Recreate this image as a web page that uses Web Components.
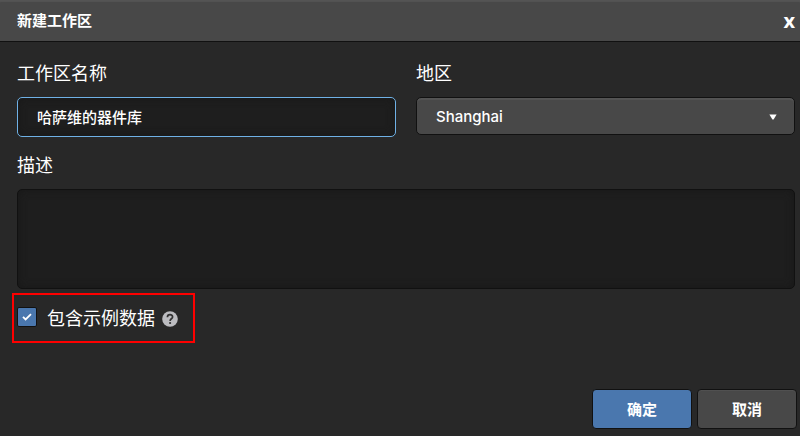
<!DOCTYPE html>
<html lang="zh-CN">
<head>
<meta charset="utf-8">
<title>新建工作区</title>
<style>
    body {
        margin: 0;
        background-color: #282828;
        color: #fff;
        font-family: Inter, "Noto Sans CJK SC", sans-serif;
    }
    .pair {
        display: grid;
        grid-template-columns: 1fr 1fr;
        align-items: start;
        gap: 20px;
    }
</style>
</head>
<body>

<workspace-dialog heading="新建工作区">
    <div class="pair">
        <text-field label="工作区名称" value="哈萨维的器件库"></text-field>
        <select-field label="地区" options="Shanghai"></select-field>
    </div>
    <text-field label="描述" multiline></text-field>
    <check-field checked>包含示例数据</check-field>
    <action-button slot="actions" class="primary">确定</action-button>
    <action-button slot="actions">取消</action-button>
</workspace-dialog>

<script>
const fieldStyle = `
    :host {
        display: block;
    }
    * {
        box-sizing: border-box;
    }
    label {
        display: block;
        margin-bottom: 11px;
        font-size: 18px;
        line-height: 24px;
    }
    input, textarea, select {
        display: block;
        width: 100%;
        margin: 0;
        padding: 0 19px;
        border: 1px solid #111;
        border-radius: 5px;
        outline: none;
        color: #fff;
        font-family: inherit;
        font-size: 15px;
        font-weight: 500;
    }
`

class WorkspaceDialog extends HTMLElement {

    constructor() {
        super()
        this.attachShadow({mode: 'open'})
        this.shadowRoot.innerHTML = `
            <style>
                :host {
                    display: block;
                }
                header {
                    display: flex;
                    justify-content: space-between;
                    align-items: center;
                    height: 41px;
                    padding: 0 5px 0 17px;
                    border-bottom: 1px solid #111;
                    background-color: #484848;
                    box-shadow: inset 0 2px 1px #545454;
                }
                h1 {
                    margin: 0;
                    font-size: 15px;
                    line-height: 20px;
                }
                button {
                    margin: 0;
                    padding: 0;
                    border: 0;
                    background: none;
                    color: #fff;
                    font: bold 20px/20px "Open Sans", sans-serif;
                }
                main {
                    display: flex;
                    flex-direction: column;
                    gap: 17px;
                    padding: 20px 5px 0 17px;
                }
                footer {
                    display: flex;
                    justify-content: flex-end;
                    gap: 5px;
                    padding: 46px 3px 7px;
                }
            </style>
            <header>
                <h1></h1>
                <button type="button" aria-label="关闭">x</button>
            </header>
            <main><slot></slot></main>
            <footer><slot name="actions"></slot></footer>`
    }

    connectedCallback() {
        this.shadowRoot.querySelector('h1').textContent = this.getAttribute('heading')
    }
}

// one line input, or a textarea with the multiline attribute
class TextField extends HTMLElement {

    constructor() {
        super()
        this.attachShadow({mode: 'open'})
    }

    connectedCallback() {
        const control = this.hasAttribute('multiline')
            ? '<textarea id="control"></textarea>'
            : '<input id="control" type="text">'
        this.shadowRoot.innerHTML = `
            <style>
                ${fieldStyle}
                input, textarea {
                    background-color: #1e1e1e;
                    box-shadow: inset 0 0 8px #181818;
                }
                input {
                    height: 40px;
                    padding-bottom: 2px;
                    border-color: #6fb1e6;
                }
                textarea {
                    height: 100px;
                    padding: 10px 19px;
                    resize: none;
                }
            </style>
            <label for="control">${this.getAttribute('label')}</label>
            ${control}`
        this.shadowRoot.querySelector('#control').value = this.getAttribute('value') || ''
    }
}

class SelectField extends HTMLElement {

    constructor() {
        super()
        this.attachShadow({mode: 'open'})
    }

    connectedCallback() {
        const options = this.getAttribute('options').split(',')
        this.shadowRoot.innerHTML = `
            <style>
                ${fieldStyle}
                .box {
                    display: grid;
                    align-items: center;
                }
                .box > * {
                    grid-area: 1 / 1;
                }
                select {
                    appearance: none;
                    height: 38px;
                    background-color: #484848;
                    box-shadow: inset 0 2px 1px #545454;
                }
                svg {
                    justify-self: end;
                    margin: 2px 18px 0 0;
                    pointer-events: none;
                }
            </style>
            <label for="control">${this.getAttribute('label')}</label>
            <div class="box">
                <select id="control">
                    ${options.map(o => `<option>${o}</option>`).join('')}
                </select>
                <svg width="8" height="6" viewBox="0 0 8 6"><path d="M.4.5h7.2L4.6 5.6H3.4z" fill="#fff"/></svg>
            </div>`
    }
}

class CheckField extends HTMLElement {

    constructor() {
        super()
        this.attachShadow({mode: 'open'})
        this.shadowRoot.innerHTML = `
            <style>
                :host {
                    display: flex;
                    align-items: center;
                    align-self: flex-start;
                    box-sizing: border-box;
                    height: 50px;
                    margin: -13px 0 0 -5px;
                    padding: 2px 15px 0 3px;
                    border: 2px solid #f00;
                }
                label {
                    display: flex;
                    align-items: center;
                    gap: 10px;
                    font-size: 18px;
                    line-height: 24px;
                }
                .box {
                    display: grid;
                    place-items: center;
                    margin-bottom: 4px;
                }
                .box > * {
                    grid-area: 1 / 1;
                }
                input {
                    appearance: none;
                    box-sizing: border-box;
                    width: 20px;
                    height: 20px;
                    margin: 0;
                    border: 1px solid #111;
                    border-radius: 2px;
                    background-color: #484848;
                }
                input:checked {
                    background-color: #4a77ae;
                }
                svg {
                    display: block;
                }
                .box svg {
                    visibility: hidden;
                    pointer-events: none;
                }
                input:checked + svg {
                    visibility: visible;
                }
                .help {
                    margin-left: 7px;
                }
            </style>
            <label>
                <span class="box">
                    <input type="checkbox">
                    <svg width="10" height="10" viewBox="0 0 10 10"><path d="M1 4.8l2.6 2.6L9 2.2" fill="none" stroke="#fff" stroke-width="1.8"/></svg>
                </span>
                <slot></slot>
            </label>
            <svg class="help" width="16" height="16" viewBox="0 0 16 16">
                <circle cx="8" cy="8" r="7.8" fill="#bcbcc0"/>
                <path d="M5.4 6.2c0-3.4 5.2-3.2 5.2-.3 0 1.9-2.5 1.9-2.5 4" fill="none" stroke="#333" stroke-width="1.7"/>
                <circle cx="8.1" cy="12" r="1.1" fill="#333"/>
            </svg>`
    }

    connectedCallback() {
        this.shadowRoot.querySelector('input').checked = this.hasAttribute('checked')
    }
}

class ActionButton extends HTMLElement {

    constructor() {
        super()
        this.attachShadow({mode: 'open'})
        this.shadowRoot.innerHTML = `
            <style>
                :host {
                    display: block;
                }
                button {
                    display: block;
                    box-sizing: border-box;
                    width: 100px;
                    height: 40px;
                    padding: 0;
                    border: 1px solid #111;
                    border-radius: 4px;
                    background-color: #484848;
                    box-shadow: inset 0 1px 1px #525252;
                    color: #fff;
                    font: bold 15px/20px "Noto Sans CJK SC", sans-serif;
                }
                :host(.primary) button {
                    background-color: #4a77ae;
                    box-shadow: none;
                }
            </style>
            <button type="button"><slot></slot></button>`
    }
}

customElements.define('workspace-dialog', WorkspaceDialog)
customElements.define('text-field', TextField)
customElements.define('select-field', SelectField)
customElements.define('check-field', CheckField)
customElements.define('action-button', ActionButton)
</script>
</body>
</html>
